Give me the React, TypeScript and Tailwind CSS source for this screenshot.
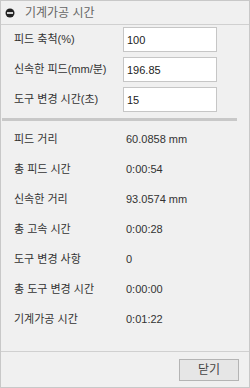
import React from 'react';

const inputs = [
    { label: '피드 축척(%)', value: '100' },
    { label: '신속한 피드(mm/분)', value: '196.85' },
    { label: '도구 변경 시간(초)', value: '15' },
];

const stats = [
    { label: '피드 거리', value: '60.0858 mm' },
    { label: '총 피드 시간', value: '0:00:54' },
    { label: '신속한 거리', value: '93.0574 mm' },
    { label: '총 고속 시간', value: '0:00:28' },
    { label: '도구 변경 사항', value: '0' },
    { label: '총 도구 변경 시간', value: '0:00:00' },
    { label: '기계가공 시간', value: '0:01:22' },
];

const font = "font-['Liberation_Sans','Noto_Sans_CJK_KR',sans-serif]";

const App = () => {
    return (
        <div className={`w-[250px] h-[388px] flex flex-col bg-[#f0f0f0] border border-[#c8c8c8] text-[#333] ${font}`}>
            {/* header */}
            <div className="h-[24px] shrink-0 flex items-center border-b border-[#d0d0d0] pl-[4px]">
                <svg width="10" height="10" viewBox="0 0 10 10" className="shrink-0">
                    <circle cx="5" cy="5" r="4.5" fill="#222" />
                    <rect x="2" y="4.2" width="6" height="1.6" fill="#fff" />
                </svg>
                <span className="ml-[10px] text-[12px] text-[#666]">기계가공 시간</span>
            </div>

            {/* settings */}
            <div className="mt-[2px] flex flex-col gap-[5px]">
                {inputs.map((row) => (
                    <div key={row.label} className="flex items-center h-[25px]">
                        <span className="w-[122px] pl-[13px] text-[11px]">{row.label}</span>
                        <input
                            readOnly
                            value={row.value}
                            className="w-[94px] h-[25px] bg-white border border-[#c6c6c6] px-[3px] text-[11px] text-[#222] outline-none"
                        />
                    </div>
                ))}
            </div>

            <div className="mt-[6px] ml-[1px] w-[235px] h-[3px] bg-[#c8c8c8]" />

            {/* results */}
            <div className="mt-[3px] flex flex-col">
                {stats.map((row) => (
                    <div key={row.label} className="flex items-center h-[30px]">
                        <span className="w-[125px] pl-[13px] text-[11px]">{row.label}</span>
                        <span className="text-[11px]">{row.value}</span>
                    </div>
                ))}
            </div>

            <div className="flex-1" />

            {/* footer */}
            <div className="h-[36px] shrink-0 border-t border-[#d0d0d0] flex justify-end items-start pt-[7px] pr-[10px]">
                <button className="w-[60px] h-[22px] bg-[#e6e6e6] border border-[#b4b4b4] text-[12px] text-[#444]">
                    닫기
                </button>
            </div>
        </div>
    );
};

export default App;
